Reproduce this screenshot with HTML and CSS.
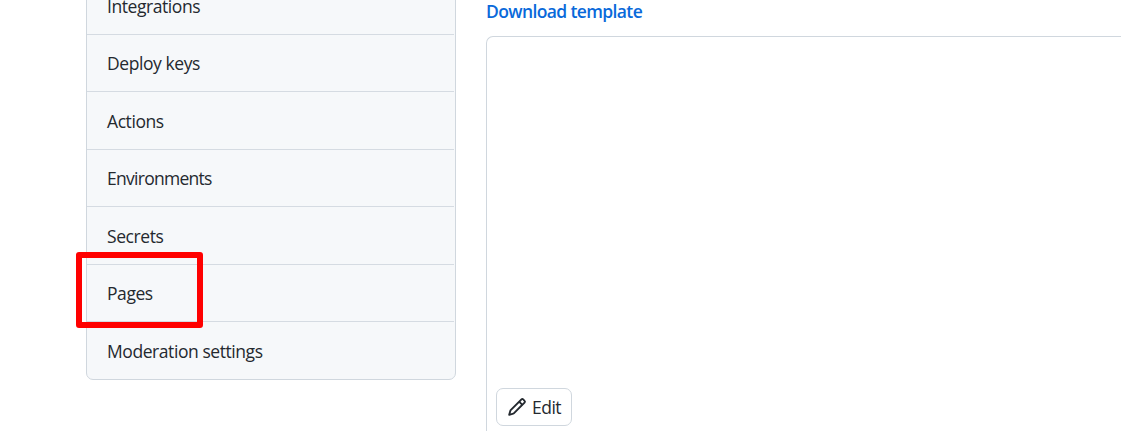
FILE: index.html
```
<!DOCTYPE html>
<html lang="en">
<head>
<meta charset="utf-8">
<title>Settings</title>
<link rel="stylesheet" href="styles.css">
</head>
<body>
<div class="layout">
  <nav class="menu">
    <a class="menu-item">Integrations</a>
    <a class="menu-item">Deploy keys</a>
    <a class="menu-item">Actions</a>
    <a class="menu-item environments">Environments</a>
    <a class="menu-item">Secrets</a>
    <a class="menu-item menu-item-marked">Pages</a>
    <a class="menu-item">Moderation settings</a>
  </nav>
  <main class="content">
    <a class="download">Download template</a>
    <section class="preview">
      <button class="edit" type="button">
        <svg class="edit-icon" viewBox="0 0 16 16" aria-hidden="true"><path fill-rule="evenodd" d="M11.013 1.427a1.75 1.75 0 012.474 0l1.086 1.086a1.75 1.75 0 010 2.474l-8.61 8.61c-.21.21-.47.364-.756.445l-3.251.93a.75.75 0 01-.927-.928l.929-3.25a1.75 1.75 0 01.445-.758l8.61-8.61zm1.414 1.06a.25.25 0 00-.354 0L10.811 3.75l1.439 1.44 1.263-1.263a.25.25 0 000-.354l-1.086-1.086zM11.189 6.25L9.75 4.81l-6.286 6.287a.25.25 0 00-.064.108l-.558 1.953 1.953-.558a.249.249 0 00.108-.064l6.286-6.286z"/></svg>
        <span class="edit-label">Edit</span>
      </button>
    </section>
  </main>
</div>
</body>
</html>
```
FILE: styles.css
```
* {
  box-sizing: border-box;
}

body {
  margin: 0;
  background: #fff;
  color: #24292f;
  font-family: "Open Sans", "Noto Sans", sans-serif;
  font-size: 17.5px;
  overflow: hidden;
}

.layout {
  display: flex;
  gap: 30px;
  height: 431px;
  padding-left: 86px;
  overflow: hidden;
}

.menu {
  display: grid;
  grid-template-rows: 58px 57px 58px 57px 58px 57px 58px;
  width: 370px;
  height: 404px;
  flex: none;
  margin-top: -24px;
  padding-right: 1px;
  background: #f6f8fa;
  border: 1px solid #d0d7de;
  border-radius: 7px;
}

.menu-item {
  display: flex;
  align-items: center;
  padding-left: 20px;
  border-bottom: 1px solid #d5dbe2;
  letter-spacing: -0.43px;
}

.menu-item:nth-child(odd) {
  padding-top: 1px;
}

.menu-item:last-child {
  padding-top: 0;
  border-bottom: 0;
}

.environments {
  letter-spacing: -0.72px;
}

.menu-item-marked {
  position: relative;
}

/* Highlight frame drawn over the menu */
.menu-item-marked::after {
  content: "";
  box-sizing: border-box;
  position: absolute;
  left: -11px;
  top: -13.5px;
  width: 127px;
  height: 76px;
  border: 6px solid #f00;
  border-radius: 3px;
}

.content {
  flex: 1;
  display: flex;
  flex-direction: column;
}

.download {
  height: 36px;
  line-height: 23px;
  color: #0969da;
  font-weight: 600;
  letter-spacing: -0.62px;
}

.preview {
  flex: 1;
  display: flex;
  align-items: flex-end;
  padding: 0 0 5px 9px;
  border: 1px solid #d0d7de;
  border-right: 0;
  border-bottom: 0;
  border-radius: 7px 0 0 0;
}

.edit {
  display: flex;
  align-items: center;
  gap: 5px;
  width: 76px;
  height: 38px;
  padding: 0 0 0 10px;
  background: #fff;
  border: 1px solid #d0d7de;
  border-radius: 7px;
  color: #24292f;
  font: inherit;
}

.edit-icon {
  width: 20px;
  height: 20px;
  fill: currentColor;
}

.edit-label {
  letter-spacing: -0.5px;
}
```
